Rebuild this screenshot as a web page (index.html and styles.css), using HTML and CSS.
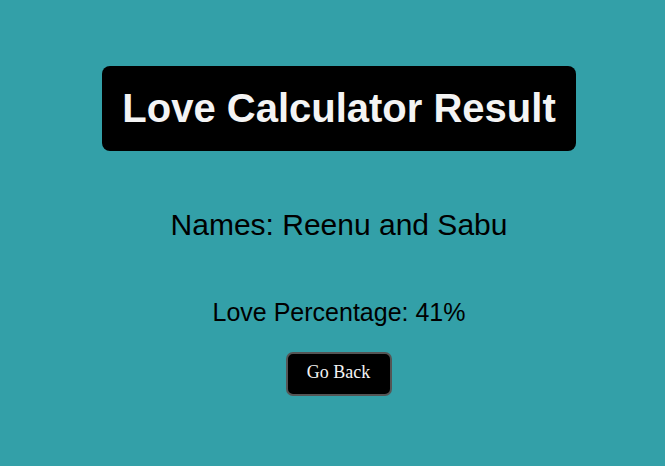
FILE: index.html
```html
<!DOCTYPE html>
<html>
<head>
<meta charset="utf-8">
<link rel="stylesheet" href="styles.css">
</head>
<body>
<main class="page">
  <h1 class="title">Love Calculator Result</h1>
  <p class="names">Names: Reenu and Sabu</p>
  <p class="percent">Love Percentage: 41%</p>
  <button class="back">Go Back</button>
</main>
</body>
</html>
```
FILE: styles.css
```css
html, body {
  margin: 0;
  padding: 0;
  background: #33a0a8;
}
.page {
  display: flex;
  flex-direction: column;
  align-items: center;
  padding: 66px 0 0 13px;
  font-family: "Liberation Sans", Arial, sans-serif;
  color: #000;
}
.title {
  margin: 0;
  background: #000;
  color: #f4f4f4;
  font-size: 40px;
  font-weight: bold;
  line-height: 45px;
  padding: 20px 20px;
  border-radius: 8px;
}
.names {
  margin: 57px 0 0;
  font-size: 30px;
  line-height: 34px;
}
.percent {
  margin: 56px 0 0;
  font-size: 25px;
  line-height: 29px;
}
.back {
  margin-top: 25px;
  font-family: "Liberation Serif", "Times New Roman", serif;
  font-size: 18px;
  color: #f4f4f4;
  background: #000;
  border: 2px solid #555;
  border-radius: 7px;
  padding: 8px 20px 12px 19px;
  line-height: 20px;
}
```
